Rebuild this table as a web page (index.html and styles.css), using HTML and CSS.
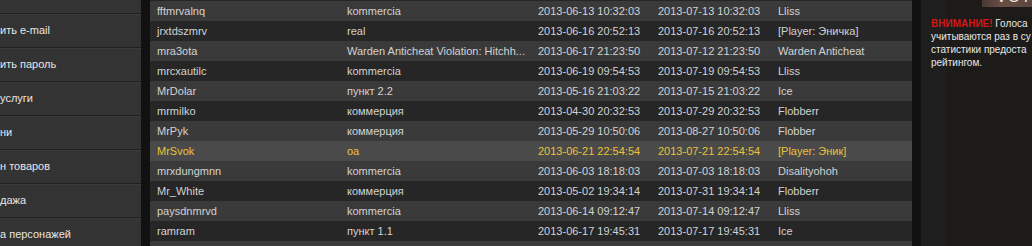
FILE: index.html
```html
<!DOCTYPE html>
<html lang="ru">
<head>
<meta charset="utf-8">
<title>Bans</title>
<link rel="stylesheet" href="styles.css">
</head>
<body>
<div class="page">
  <nav class="sidebar">
    <div class="side-top"></div>
    <a class="side-item">ить e-mail</a>
    <a class="side-item">ить пароль</a>
    <a class="side-item">услуги</a>
    <a class="side-item">ни</a>
    <a class="side-item">н товаров</a>
    <a class="side-item">дажа</a>
    <a class="side-item">а персонажей</a>
  </nav>
  <main class="bans">
    <div class="row"><span></span><span></span><span></span><span></span><span></span></div>
    <div class="row"><span>fftmrvalnq</span><span>kommercia</span><span>2013-06-13 10:32:03</span><span>2013-07-13 10:32:03</span><span>Lliss</span></div>
    <div class="row"><span>jrxtdszmrv</span><span>real</span><span>2013-06-16 20:52:13</span><span>2013-07-16 20:52:13</span><span>[Player: Эничка]</span></div>
    <div class="row"><span>mra3ota</span><span>Warden Anticheat Violation: Hitchh...</span><span>2013-06-17 21:23:50</span><span>2013-07-12 21:23:50</span><span>Warden Anticheat</span></div>
    <div class="row"><span>mrcxautilc</span><span>kommercia</span><span>2013-06-19 09:54:53</span><span>2013-07-19 09:54:53</span><span>Lliss</span></div>
    <div class="row"><span>MrDolar</span><span>пункт 2.2</span><span>2013-05-16 21:03:22</span><span>2013-07-15 21:03:22</span><span>Ice</span></div>
    <div class="row"><span>mrmilko</span><span>коммерция</span><span>2013-04-30 20:32:53</span><span>2013-07-29 20:32:53</span><span>Flobberr</span></div>
    <div class="row"><span>MrPyk</span><span>коммерция</span><span>2013-05-29 10:50:06</span><span>2013-08-27 10:50:06</span><span>Flobber</span></div>
    <div class="row active"><span>MrSvok</span><span>оа</span><span>2013-06-21 22:54:54</span><span>2013-07-21 22:54:54</span><span>[Player: Эник]</span></div>
    <div class="row"><span>mrxdungmnn</span><span>kommercia</span><span>2013-06-03 18:18:03</span><span>2013-07-03 18:18:03</span><span>Disalityohoh</span></div>
    <div class="row"><span>Mr_White</span><span>коммерция</span><span>2013-05-02 19:34:14</span><span>2013-07-31 19:34:14</span><span>Flobberr</span></div>
    <div class="row"><span>paysdnmrvd</span><span>kommercia</span><span>2013-06-14 09:12:47</span><span>2013-07-14 09:12:47</span><span>Lliss</span></div>
    <div class="row"><span>ramram</span><span>пункт 1.1</span><span>2013-06-17 19:45:31</span><span>2013-07-17 19:45:31</span><span>Ice</span></div>
    <div class="row"><span></span><span></span><span></span><span></span><span></span></div>
  </main>
  <aside class="panel">
    <div class="vote"><span class="vote-text">VOTE</span></div>
    <p class="notice"><b class="warn">ВНИМАНИЕ!</b> Голоса<br>учитываются раз в су<br>статистики предоста<br>рейтингом.</p>
  </aside>
</div>
</body>
</html>
```

FILE: styles.css
```css
html, body {
  margin: 0;
  padding: 0;
}
body {
  width: 1032px;
  height: 246px;
  overflow: hidden;
  background: #111111;
  font-family: "Liberation Sans", Arial, sans-serif;
}
.page {
  display: flex;
  align-items: flex-start;
  height: 246px;
  width: 1032px;
  overflow: hidden;
}
.sidebar {
  width: 141px;
  height: 246px;
  background: #333333;
  display: flex;
  flex-direction: column;
  overflow: hidden;
  flex: none;
}
.side-top {
  height: 13px;
  flex: none;
}
.side-item {
  display: block;
  flex: none;
  height: 33px;
  line-height: 33px;
  border-top: 1px solid #202020;
  box-shadow: inset 0 1px 0 #3a3a3a;
  color: #e6e6e6;
  font-size: 11px;
  white-space: nowrap;
}
.bans {
  flex: none;
  width: 762px;
  margin-left: 9px;
  margin-top: -19px;
  display: flex;
  flex-direction: column;
}
.row {
  display: grid;
  grid-template-columns: 190px 191px 120px 120px 1fr;
  padding-left: 7px;
  height: 20px;
  line-height: 20px;
  font-size: 11px;
  color: #d2d2d2;
  white-space: nowrap;
  overflow: hidden;
}
.row:nth-child(odd) {
  background: #262626;
}
.row:nth-child(even) {
  background: #3a3a3a;
}
.row.active {
  background: #4a4a4a;
  color: #e9c23a;
}
.panel {
  flex: 1;
  min-width: 0;
  height: 246px;
  margin-left: 9px;
  background: linear-gradient(to right, #1e1e1e 0, #1e1e1e 26px, #1c1b19 26px);
  padding-left: 10px;
  box-sizing: border-box;
  overflow: hidden;
}
.vote {
  height: 7px;
  margin-left: 51px;
  background: linear-gradient(to right, #4a3833, #6a4e44 40%, #5a4540);
  overflow: hidden;
}
.vote-text {
  display: block;
  margin-top: -11px;
  margin-left: 14px;
  font-size: 16px;
  line-height: 16px;
  color: #e8e4e2;
  letter-spacing: 1px;
}
.notice {
  margin: 10px 0 0;
  font-size: 10px;
  line-height: 13px;
  color: #e8e8e8;
  white-space: nowrap;
}
.warn {
  color: #d01818;
}
```
